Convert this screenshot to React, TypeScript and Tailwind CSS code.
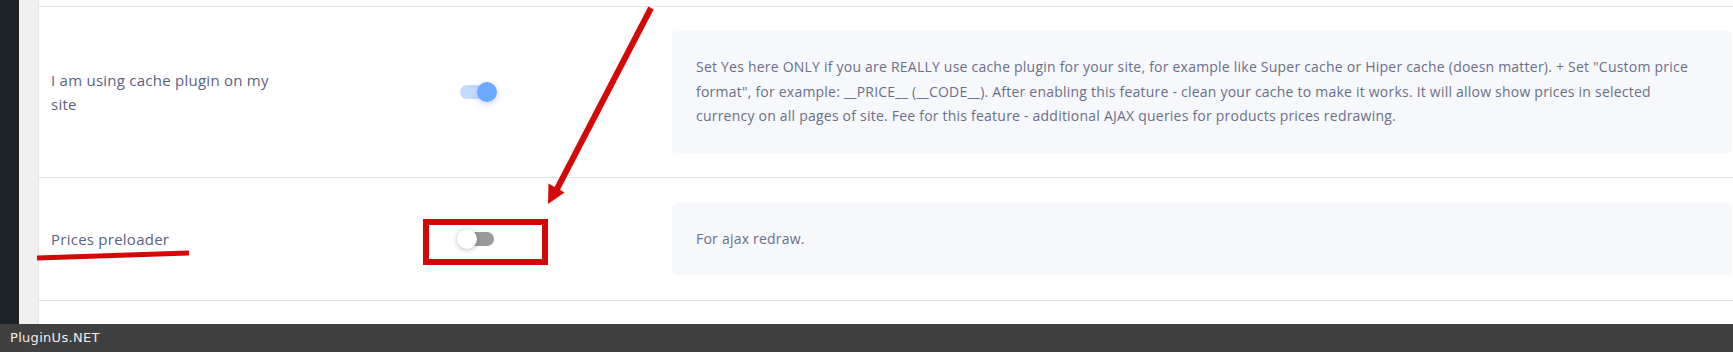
function Toggle({ on }: { on: boolean }) {
  return (
    <span className="relative block h-[20px] w-[40px]">
      <span
        className={
          on
            ? "absolute left-[3px] top-[3px] h-[14px] w-[34px] rounded-full bg-[#c4dbfe]"
            : "absolute left-[3px] top-[3px] h-[14px] w-[34px] rounded-full bg-[#9a9a9a]"
        }
      />
      <span
        className={
          on
            ? "absolute left-[20px] top-0 size-[20px] rounded-full bg-[#6ba9ff] shadow-[0_2px_6px_rgba(90,120,230,0.35)]"
            : "absolute left-0 top-0 size-[20px] rounded-full bg-white shadow-[0_1px_5px_rgba(0,0,0,0.28)]"
        }
      />
    </span>
  );
}

function OptionRow({
  label,
  on,
  children,
  height,
}: {
  label: string;
  on: boolean;
  children: React.ReactNode;
  height: string;
}) {
  return (
    <div className={`grid grid-cols-[406px_215px_1fr] items-center border-t border-[#e1e2e8] pl-[12px] ${height}`}>
      <div className="w-[225px] text-[15px] leading-[24px] tracking-[0.25px] text-[#5c6180]">{label}</div>
      <div>
        <Toggle on={on} />
      </div>
      <div className="mr-[1px] rounded-[5px] bg-[#f7f8fc] px-[24px] py-[24px] text-[14px] leading-[24.5px] tracking-[0.22px] text-[#6a6f88]">
        {children}
      </div>
    </div>
  );
}

export default function App() {
  return (
    <div className="relative flex h-[352px] w-full flex-col overflow-hidden bg-white font-['Open_Sans',sans-serif]">
      <div className="flex flex-1">
        <aside className="w-[19px] bg-[#1d2327]" />
        <div className="w-[19px] bg-[#f0f0f1]" />
        <section className="flex-1 border-l border-[#e6e6e8] bg-white pt-[6px]">
          <OptionRow label="I am using cache plugin on my site" on={true} height="h-[171px]">
            Set Yes here ONLY if you are REALLY use cache plugin for your site, for example like Super cache or Hiper
            cache (doesn matter). + Set "Custom price
            <br />
            format", for example: __PRICE__ (__CODE__). After enabling this feature - clean your cache to make it
            works. It will allow show prices in selected
            <br />
            currency on all pages of site. Fee for this feature - additional AJAX queries for products prices redrawing.
          </OptionRow>
          <OptionRow label="Prices preloader" on={false} height="h-[123px]">
            For ajax redraw.
          </OptionRow>
          <div className="border-t border-[#e1e2e8]" />
        </section>
      </div>
      <footer className="flex h-[28px] items-center bg-[#404040] pl-[10px] font-['DejaVu_Sans',sans-serif] text-[13px] tracking-[0.3px] text-[#ededed]">
        PluginUs.NET
      </footer>

      {/* red annotations drawn over the screenshot */}
      <svg className="pointer-events-none absolute left-0 top-0" width="1733" height="352" viewBox="0 0 1733 352">
        <line x1="651" y1="8" x2="557" y2="189" stroke="#d50808" strokeWidth="6" />
        <polygon points="548,204 564.5,192.5 548.5,183.5" fill="#d50808" />
        <rect x="426" y="222" width="119" height="40" fill="none" stroke="#d50808" strokeWidth="6" />
        <line x1="37" y1="258" x2="189" y2="253" stroke="#d50808" strokeWidth="5" />
      </svg>
    </div>
  );
}
